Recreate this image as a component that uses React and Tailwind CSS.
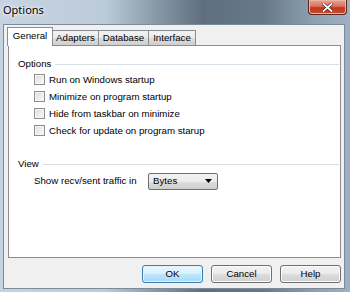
import React from "react";

const font = { fontFamily: '"Liberation Sans", Arial, sans-serif' };

function Checkbox({ label }) {
  return (
    <div className="flex h-[17px] items-center pl-[25px]">
      <div className="h-[11px] w-[11px] border border-[#8e8f8f] bg-gradient-to-br from-[#dcdcdc] to-[#fbfbfb] shadow-[inset_0_0_0_1px_#f4f4f4]" />
      <span className="ml-[4px] text-[9.7px] leading-none text-black">{label}</span>
    </div>
  );
}

function Btn({ children, primary }) {
  return (
    <div
      className={
        "flex h-[18px] w-[61px] items-center justify-center rounded-[3px] border text-[9.7px] leading-none text-black " +
        (primary
          ? "border-[#3c7fb1] bg-[linear-gradient(#eaf6fd_0%,#d9f0fc_50%,#bee6fd_51%,#a7d9f5_100%)] shadow-[inset_0_0_0_1px_#e0f3fd]"
          : "border-[#707070] bg-[linear-gradient(#f2f2f2_0%,#ebebeb_50%,#dddddd_51%,#cfcfcf_100%)] shadow-[inset_0_0_0_1px_#fbfbfb]")
      }
    >
      {children}
    </div>
  );
}

const tabBg =
  "bg-[linear-gradient(#f2f2f2_0%,#ebebeb_50%,#dddddd_51%,#cfcfcf_100%)]";

export default function App() {
  return (
    <div
      className="relative h-[292px] w-[350px] overflow-hidden bg-[linear-gradient(90deg,#c6d4e1_0%,#bccbd9_30%,#8797a7_45%,#5f6f80_58%,#66788a_75%,#8ea1b3_90%,#9fb1c2_100%)]"
      style={font}
    >
      {/* title bar */}
      <div className="flex h-[24px] items-center pl-[3px] pb-[6px]">
        <span
          className="text-[11px] leading-none text-black [text-shadow:0_0_6px_#ffffff,0_0_3px_#ffffff]"
          style={{ fontFamily: '"Noto Sans", "Liberation Sans", sans-serif' }}
        >
          Options
        </span>
      </div>
      {/* close button */}
      <div className="absolute right-[3px] top-0 flex h-[15px] w-[39px] items-center justify-center rounded-b-[4px] border border-t-0 border-[#5a2b24] bg-[linear-gradient(#e8a494_0%,#d7735f_45%,#c3361c_55%,#c94a2f_100%)] shadow-[inset_0_0_0_1px_#eeb3a6]">
        <svg width="11" height="9" viewBox="0 0 11 9">
          <path d="M1.5 1 L9.5 8 M9.5 1 L1.5 8" stroke="#4a1a12" strokeWidth="3" strokeLinecap="square" />
          <path d="M1.5 1 L9.5 8 M9.5 1 L1.5 8" stroke="#ffffff" strokeWidth="1.8" strokeLinecap="square" />
        </svg>
      </div>
      {/* client */}
      <div className="ml-[3px] flex h-[265px] w-[342px] flex-col border border-[#7d8b99] bg-[#f0f0f0] pl-[3px] pt-[2px]">
        {/* tabs */}
        <div className="relative z-10 flex h-[18px] items-end">
          <div className="-mb-px flex h-[19px] w-[46px] items-center justify-center border border-b-0 border-[#898c95] bg-white pb-[2px] text-[9.7px] leading-none text-black">
            General
          </div>
          <div className={"flex h-[15px] w-[46px] items-center justify-center border border-l-0 border-b-0 border-[#898c95] text-[9.7px] leading-none text-black " + tabBg}>
            Adapters
          </div>
          <div className={"flex h-[15px] w-[50px] items-center justify-center border border-l-0 border-b-0 border-[#898c95] text-[9.7px] leading-none text-black " + tabBg}>
            Database
          </div>
          <div className={"flex h-[15px] w-[47px] items-center justify-center border border-l-0 border-b-0 border-[#898c95] text-[9.7px] leading-none text-black " + tabBg}>
            Interface
          </div>
        </div>
        {/* panel */}
        <div className="ml-[1px] flex h-[213px] w-[333px] flex-col border border-[#898c95] bg-white pt-[11px]">
          <div className="flex h-[14px] items-center pl-[9px] pr-[1px]">
            <span className="text-[9.7px] leading-none text-black">Options</span>
            <div className="ml-[4px] h-px flex-1 bg-[#d5dfe5]" />
          </div>
          <Checkbox label="Run on Windows startup" />
          <Checkbox label="Minimize on program startup" />
          <Checkbox label="Hide from taskbar on minimize" />
          <Checkbox label="Check for update on program starup" />
          <div className="mt-[18px] flex h-[14px] items-center pl-[9px] pr-[1px]">
            <span className="text-[9.7px] leading-none text-black">View</span>
            <div className="ml-[4px] h-px flex-1 bg-[#d5dfe5]" />
          </div>
          <div className="mt-[1px] flex h-[18px] items-center pl-[25px]">
            <span className="w-[114px] text-[9.7px] leading-none text-black">Show recv/sent traffic in</span>
            <div className={"flex h-[17px] w-[70px] items-center justify-between rounded-[2px] border border-[#707070] pl-[4px] pr-[5px] text-[9.7px] leading-none text-black " + tabBg}>
              <span>Bytes</span>
              <svg width="7" height="4" viewBox="0 0 7 4">
                <path d="M0 0 H7 L3.5 4 Z" fill="#000" />
              </svg>
            </div>
          </div>
        </div>
        {/* buttons */}
        <div className="mt-[7px] flex justify-end gap-[8px] pr-[3px]">
          <Btn primary>OK</Btn>
          <Btn>Cancel</Btn>
          <Btn>Help</Btn>
        </div>
      </div>
    </div>
  );
}
